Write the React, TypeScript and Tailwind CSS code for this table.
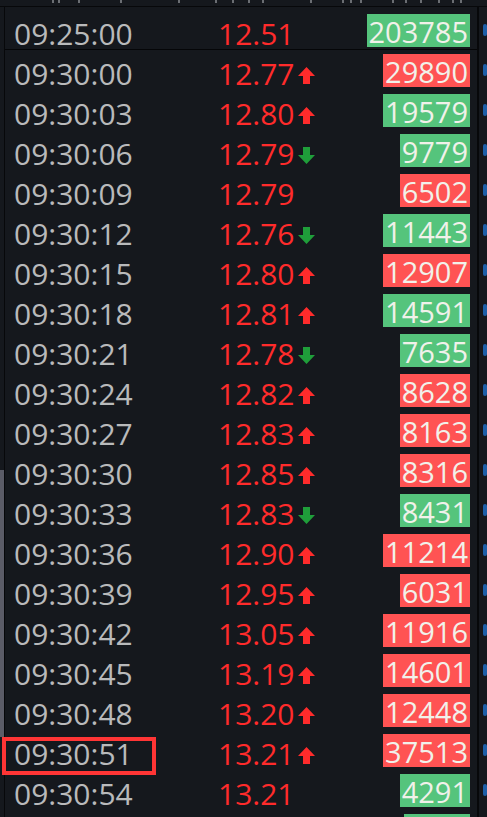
import React from "react";

type Dir = "up" | "down" | "none";
const rows: [string, string, Dir, string, "g" | "r"][] = [
  ["09:25:00", "12.51", "none", "203785", "g"],
  ["09:30:00", "12.77", "up", "29890", "r"],
  ["09:30:03", "12.80", "up", "19579", "g"],
  ["09:30:06", "12.79", "down", "9779", "g"],
  ["09:30:09", "12.79", "none", "6502", "r"],
  ["09:30:12", "12.76", "down", "11443", "g"],
  ["09:30:15", "12.80", "up", "12907", "r"],
  ["09:30:18", "12.81", "up", "14591", "g"],
  ["09:30:21", "12.78", "down", "7635", "g"],
  ["09:30:24", "12.82", "up", "8628", "r"],
  ["09:30:27", "12.83", "up", "8163", "r"],
  ["09:30:30", "12.85", "up", "8316", "r"],
  ["09:30:33", "12.83", "down", "8431", "g"],
  ["09:30:36", "12.90", "up", "11214", "r"],
  ["09:30:39", "12.95", "up", "6031", "r"],
  ["09:30:42", "13.05", "up", "11916", "r"],
  ["09:30:45", "13.19", "up", "14601", "r"],
  ["09:30:48", "13.20", "up", "12448", "r"],
  ["09:30:51", "13.21", "up", "37513", "r"],
  ["09:30:54", "13.21", "none", "4291", "g"],
];

function Arrow({ dir }: { dir: Dir }) {
  if (dir === "none") return null;
  const color = dir === "up" ? "#ff2b2b" : "#1f9e3a";
  return (
    <svg width="17" height="18" viewBox="0 0 17 18" className="ml-[3px] mt-[4px] shrink-0">
      {dir === "up" ? (
        <polygon points="8.5,0 17,9 12,9 12,17 5,17 5,9 0,9" fill={color} />
      ) : (
        <polygon points="8.5,17 17,8 12,8 12,0 5,0 5,8 0,8" fill={color} />
      )}
    </svg>
  );
}

export default function App() {
  const marks = [52, 58, 78, 120, 178, 215, 232, 248, 262, 310, 342, 350, 360, 392, 405, 420, 438, 452, 460];
  return (
    <div
      className="w-[487px] h-[817px] overflow-hidden bg-[#15181d] flex flex-col"
      style={{ fontFamily: '"Open Sans", "Noto Sans", sans-serif' }}
    >
      <div className="relative h-[6px] shrink-0 border-b border-[#07080a] box-content">
        {marks.map((x, i) => (
          <div
            key={i}
            className="absolute top-0 w-[2px] h-[3px] bg-[#6b6e73]"
            style={{ left: x }}
          />
        ))}
      </div>
      <div className="flex flex-1 min-h-0">
        <div className="w-[4px] shrink-0 border-r border-[#07080a] box-content flex flex-col">
          <div className="h-[463px]" />
          <div className="h-[267px] bg-[#5b5c67]" />
        </div>
        <div className="flex-1 min-w-0 pt-[3px]">
          {rows.map(([t, p, d, v, c], i) => (
            <div
              key={i}
              className={`relative flex items-start h-[40px] pl-[9px] pr-[7px] ${
                i === 0 ? "border-b border-[#050608]" : ""
              }`}
            >
              <span className="w-[204px] pt-[4px] text-[30px] leading-[40px] text-[#b9babb]">
                {t}
              </span>
              <span className="flex items-center pt-[4px] text-[30px] leading-[40px] text-[#ff2b2b]">
                {p}
                <Arrow dir={d} />
              </span>
              <div className="flex-1" />
              <span
                className={`mt-[4px] h-[33px] px-[2px] pt-[1px] text-[29px] leading-[33px] text-[#f1f1ea] ${
                  c === "g" ? "bg-[#55c47c]" : "bg-[#ff5353]"
                }`}
              >
                {v}
              </span>
              {i === 18 && (
                <div className="absolute left-[-3px] top-[7px] w-[154px] h-[38px] border-[4px] border-[#ff3535]" />
              )}
            </div>
          ))}
          <div className="flex h-[40px] pr-[7px] justify-end">
            <div className="mt-[4px] h-[33px] w-[66px] bg-[#55c47c]" />
          </div>
        </div>
        <div className="w-[8px] shrink-0 border-l-2 border-[#07080a] box-content pt-[3px] overflow-hidden">
          {rows.map((_, i) => (
            <div key={i} className="h-[40px] flex items-center">
              <div className="ml-[4px] w-[10px] h-[12px] rounded-full bg-[#1d5fa8]" />
            </div>
          ))}
        </div>
      </div>
    </div>
  );
}
